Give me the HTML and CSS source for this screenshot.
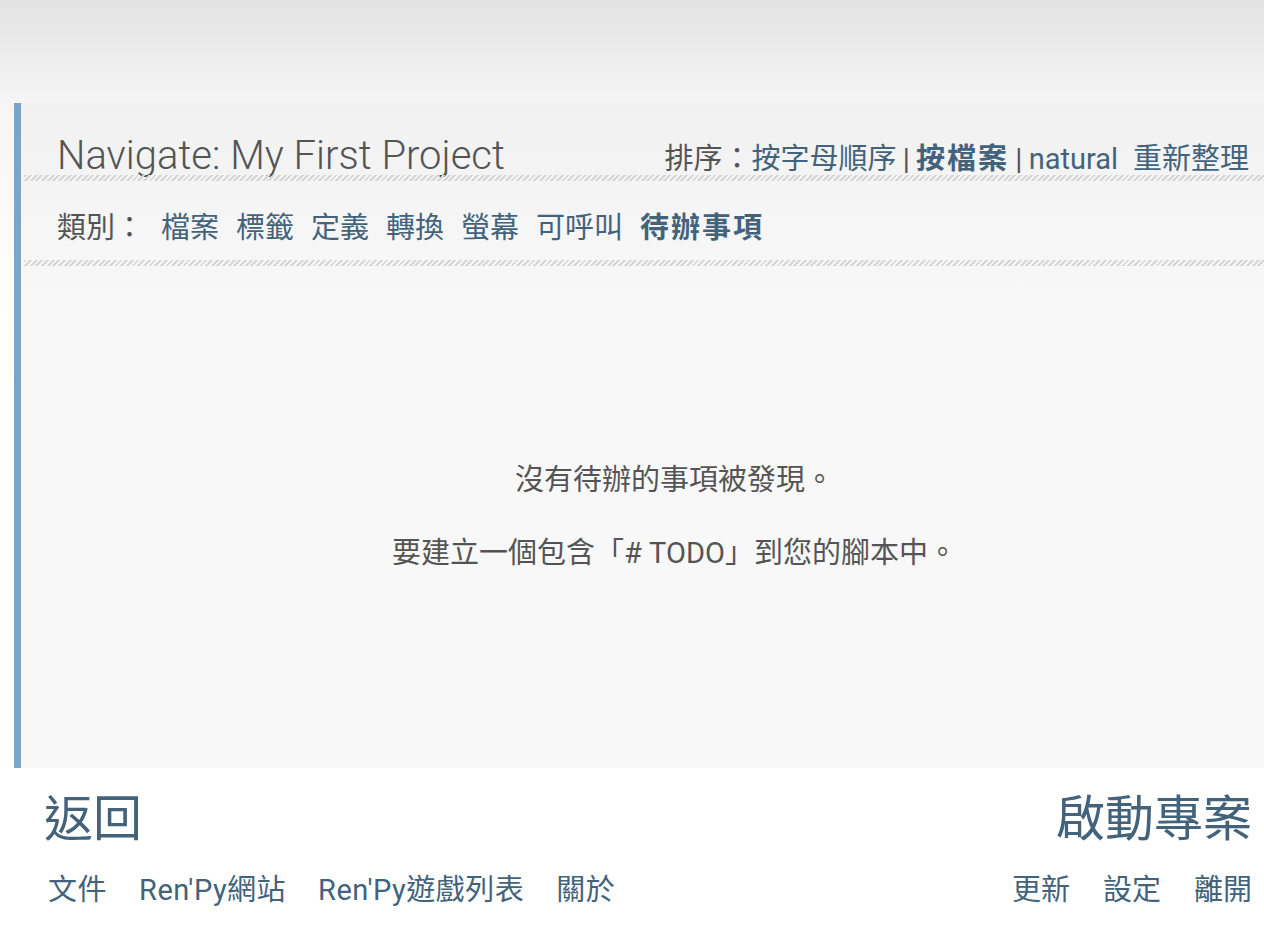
FILE: index.html
```html
<!DOCTYPE html>
<html lang="zh-Hant">
<head>
<meta charset="utf-8">
<title>Navigate</title>
<link rel="stylesheet" href="styles.css">
</head>
<body>
<div class="top"></div>
<div class="panel">
  <div class="header">
    <div class="title">Navigate: My First Project</div>
    <div class="sort"><span class="label">排序：</span><a class="link">按字母順序</a> <span class="sep">|</span> <a class="link bold">按檔案</a> <span class="sep">|</span> <a class="link">natural</a><a class="link refresh">重新整理</a></div>
  </div>
  <div class="hatch"></div>
  <div class="cats">
    <span class="label">類別：</span>
    <a class="link">檔案</a>
    <a class="link">標籤</a>
    <a class="link">定義</a>
    <a class="link">轉換</a>
    <a class="link">螢幕</a>
    <a class="link">可呼叫</a>
    <a class="link bold">待辦事項</a>
  </div>
  <div class="hatch"></div>
  <div class="content">
    <p class="msg">沒有待辦的事項被發現。</p>
    <p class="msg">要建立一個包含「# TODO」到您的腳本中。</p>
  </div>
</div>
<div class="footer">
  <div class="big-row">
    <a class="link big">返回</a>
    <a class="link big">啟動專案</a>
  </div>
  <div class="small-row">
    <div class="group left">
      <a class="link">文件</a>
      <a class="link">Ren'Py網站</a>
      <a class="link">Ren'Py遊戲列表</a>
      <a class="link">關於</a>
    </div>
    <div class="group right">
      <a class="link">更新</a>
      <a class="link">設定</a>
      <a class="link">離開</a>
    </div>
  </div>
</div>
</body>
</html>
```
FILE: styles.css
```css
html, body {
  margin: 0;
  padding: 0;
}
body {
  width: 1264px;
  height: 932px;
  overflow: hidden;
  font-family: Roboto, "Noto Sans CJK TC", sans-serif;
  font-weight: 400;
  color: #545454;
  background: linear-gradient(#e3e3e3 0, #f5f5f5 103px, #fcfcfc 250px, #ffffff 400px);
}
.top {
  height: 103px;
}
.panel {
  margin-left: 14px;
  height: 665px;
  box-sizing: border-box;
  border-left: 7px solid #79a6c9;
  background: linear-gradient(#f1f1f1 0, #f8f8f8 190px, #f8f8f8 100%);
  display: flex;
  flex-direction: column;
}
.link {
  color: #42637b;
  text-decoration: none;
}
.bold {
  font-weight: 700;
  letter-spacing: 2px;
}
.header {
  height: 72px;
  box-sizing: border-box;
  padding: 33px 15px 0 36px;
  display: flex;
  justify-content: space-between;
  align-items: baseline;
}
.title {
  font-family: "Roboto Light", Roboto, "Noto Sans CJK TC", sans-serif;
  font-size: 40px;
  line-height: 40px;
  color: #545454;
}
.sort {
  font-size: 29px;
  line-height: 29px;
  word-spacing: -1px;
}
.sort .sep {
  color: #545454;
}
.refresh {
  margin-left: 15px;
}
.hatch {
  height: 6px;
  margin-left: 3px;
  background: repeating-linear-gradient(135deg, #d6d6d6 0 2px, transparent 2px 4px);
  flex: none;
}
.cats {
  padding: 33px 0 18px 36px;
  font-size: 29px;
  line-height: 28px;
  display: flex;
  gap: 17px;
}
.content {
  flex: 1;
  display: flex;
  flex-direction: column;
  align-items: center;
  justify-content: center;
  padding-left: 64px;
  gap: 44px;
}
.msg {
  margin: 0;
  font-size: 29px;
  line-height: 29px;
  color: #545454;
}
.footer {
  padding: 28px 12px 0 44px;
}
.big-row {
  display: flex;
  justify-content: space-between;
  font-size: 49px;
  line-height: 48px;
}
.small-row {
  margin-top: 32px;
  margin-left: 4px;
  display: flex;
  justify-content: space-between;
  font-size: 29px;
  line-height: 29px;
}
.group {
  display: flex;
}
.group.left {
  gap: 32px;
  letter-spacing: 0.5px;
}
.group.right {
  gap: 33px;
}
```
